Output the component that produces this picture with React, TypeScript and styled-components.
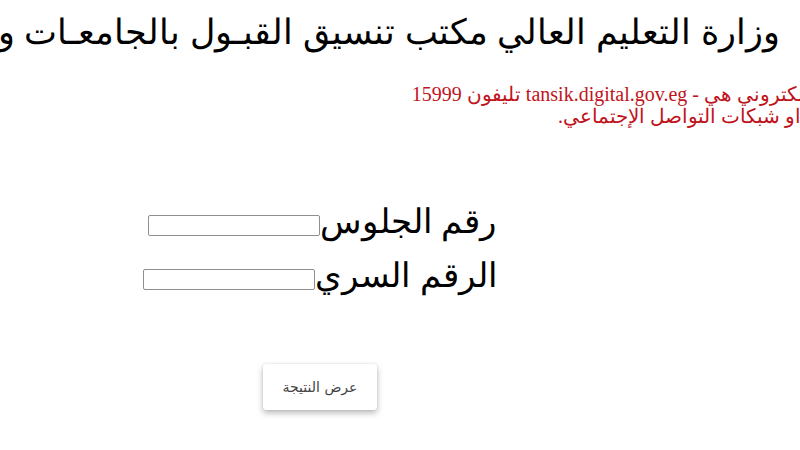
import * as React from 'react';
import styled, { createGlobalStyle } from 'styled-components';

const GlobalStyle = createGlobalStyle`
  html, body {
    margin: 0;
    padding: 0;
    background: #ffffff;
  }
`;

const Page = styled.div`
  width: 800px;
  height: 450px;
  overflow: hidden;
  background: #ffffff;
  direction: rtl;
`;

const Title = styled.h1`
  margin: 0;
  padding: 7px 20px 0 0;
  font-family: 'Liberation Sans', Arial, sans-serif;
  font-size: 35.2px;
  font-weight: normal;
  line-height: 50px;
  color: #000;
  white-space: nowrap;
`;

const Notice = styled.div`
  margin: 26px -285px 0 0;
  font-family: 'Liberation Serif', 'Times New Roman', serif;
  font-size: 20px;
  line-height: 22px;
  color: #c0141c;
  white-space: nowrap;
`;

const FormArea = styled.form`
  width: 640px;
  margin: 67px auto 0 0;
  display: flex;
  flex-direction: column;
  align-items: center;
`;

const Field = styled.label<{ $shift: number }>`
  display: flex;
  align-items: center;
  height: 54px;
  margin-left: ${p => p.$shift}px;
  font-family: 'Liberation Sans', Arial, sans-serif;
  font-size: 34px;
  color: #000;
`;

const Input = styled.input`
  width: 172px;
  height: 21px;
  box-sizing: border-box;
  margin: 8px 0 0 0;
  border: 1px solid #8f8f8f;
  border-radius: 2px;
  background: #fff;
`;

const Submit = styled.button`
  margin-top: 62px;
  width: 114px;
  height: 46px;
  border: none;
  border-radius: 3px;
  background: #fff;
  box-shadow: 0 3px 6px rgba(0, 0, 0, 0.28), 0 0 2px rgba(0, 0, 0, 0.12);
  font-family: 'DejaVu Sans', 'Liberation Sans', sans-serif;
  font-size: 14px;
  color: #444;
  cursor: pointer;
`;

export default function App() {
  return (
    <>
      <GlobalStyle />
      <Page>
        <Title>وزارة التعليم العالي مكتب تنسيق القبـول بالجامعـات والمعاهد</Title>
        <Notice>
          الموقع الرسمي لمكتب التنسيق الإلكتروني هي - tansik.digital.gov.eg تليفون 15999
          <br />
          ولا يعتد بأي مواقع أخرى على النت او شبكات التواصل الإجتماعي.
        </Notice>
        <FormArea onSubmit={e => e.preventDefault()}>
          <Field $shift={4}>
            رقم الجلوس
            <Input type="text" />
          </Field>
          <Field $shift={0}>
            الرقم السري
            <Input type="password" />
          </Field>
          <Submit type="submit">عرض النتيجة</Submit>
        </FormArea>
      </Page>
    </>
  );
}
